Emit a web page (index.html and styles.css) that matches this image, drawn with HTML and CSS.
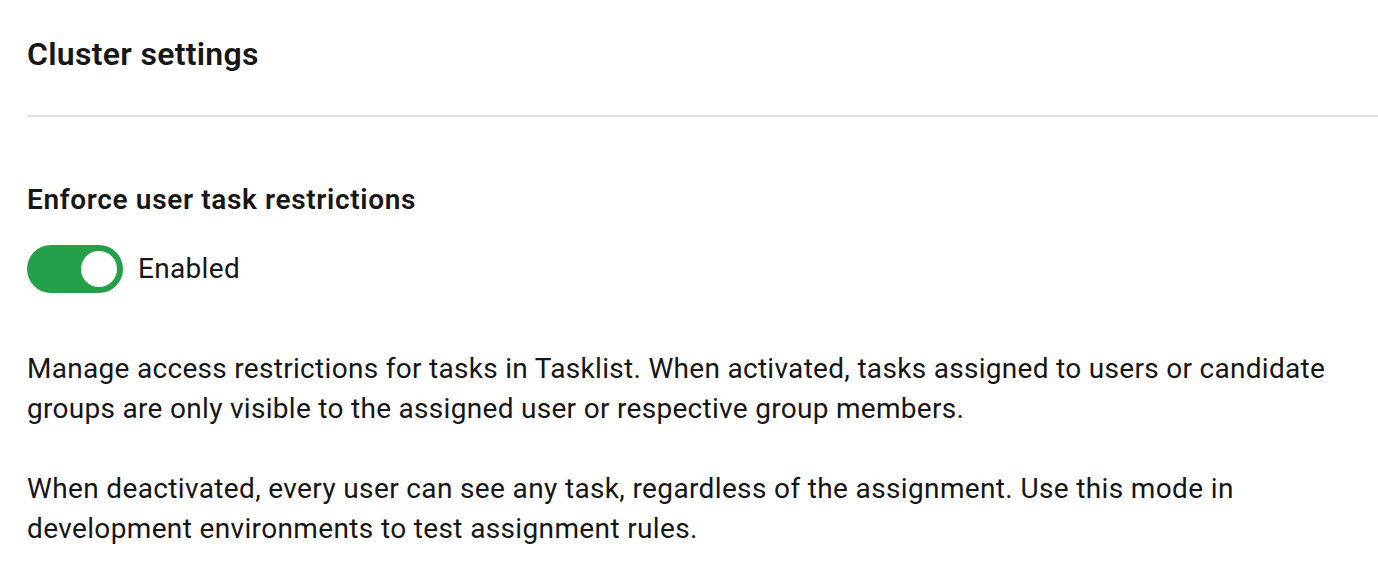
FILE: index.html
```html
<!DOCTYPE html>
<html lang="en">
<head>
  <meta charset="UTF-8">
  <meta name="viewport" content="width=device-width, initial-scale=1.0">
  <title>Cluster settings</title>
  <link rel="stylesheet" href="styles.css">
</head>
<body>
  <div class="page">
    <h1 class="page-title">Cluster settings</h1>
    <section class="setting">
      <h2>Enforce user task restrictions</h2>
      <label class="toggle">
        <input type="checkbox" checked>
        <span class="track"><span class="knob"></span></span>
        <span class="toggle-text">Enabled</span>
      </label>
      <p class="first">Manage access restrictions for tasks in Tasklist. When activated, tasks assigned to users or candidate groups are only visible to the assigned user or respective group members.</p>
      <p>When deactivated, every user can see any task, regardless of the assignment. Use this mode in development environments to test assignment rules.</p>
    </section>
  </div>
</body>
</html>
```

FILE: styles.css
```css
body {
  margin: 0;
  background: #ffffff;
  color: #161616;
  font-family: Roboto, "Noto Sans", Arial, sans-serif;
}
.page {
  padding: 34px 0 0 27px;
}
.page-title {
  margin: 0;
  font-size: 32px;
  line-height: 40px;
  font-weight: 600;
  letter-spacing: 0.3px;
  padding-bottom: 41px;
  border-bottom: 2px solid #e0e0e0;
}
.setting {
  padding-right: 40px;
}
.setting h2 {
  margin: 63px 0 0;
  font-size: 28px;
  line-height: 40px;
  font-weight: 600;
  letter-spacing: 0.65px;
}
.toggle {
  display: flex;
  align-items: center;
  gap: 15px;
  margin-top: 25px;
  cursor: pointer;
}
.toggle input {
  display: none;
}
.track {
  position: relative;
  width: 96px;
  height: 48px;
  border-radius: 24px;
  background: #24a148;
}
.knob {
  position: absolute;
  top: 6px;
  right: 6px;
  width: 36px;
  height: 36px;
  border-radius: 50%;
  background: #ffffff;
}
.toggle-text {
  font-size: 28px;
  line-height: 40px;
  letter-spacing: 0.32px;
}
.setting p {
  margin: 40px 0 0;
  font-size: 28px;
  line-height: 40px;
  letter-spacing: 0.36px;
}
.setting p.first {
  margin-top: 56px;
  letter-spacing: 0.3px;
}
```
